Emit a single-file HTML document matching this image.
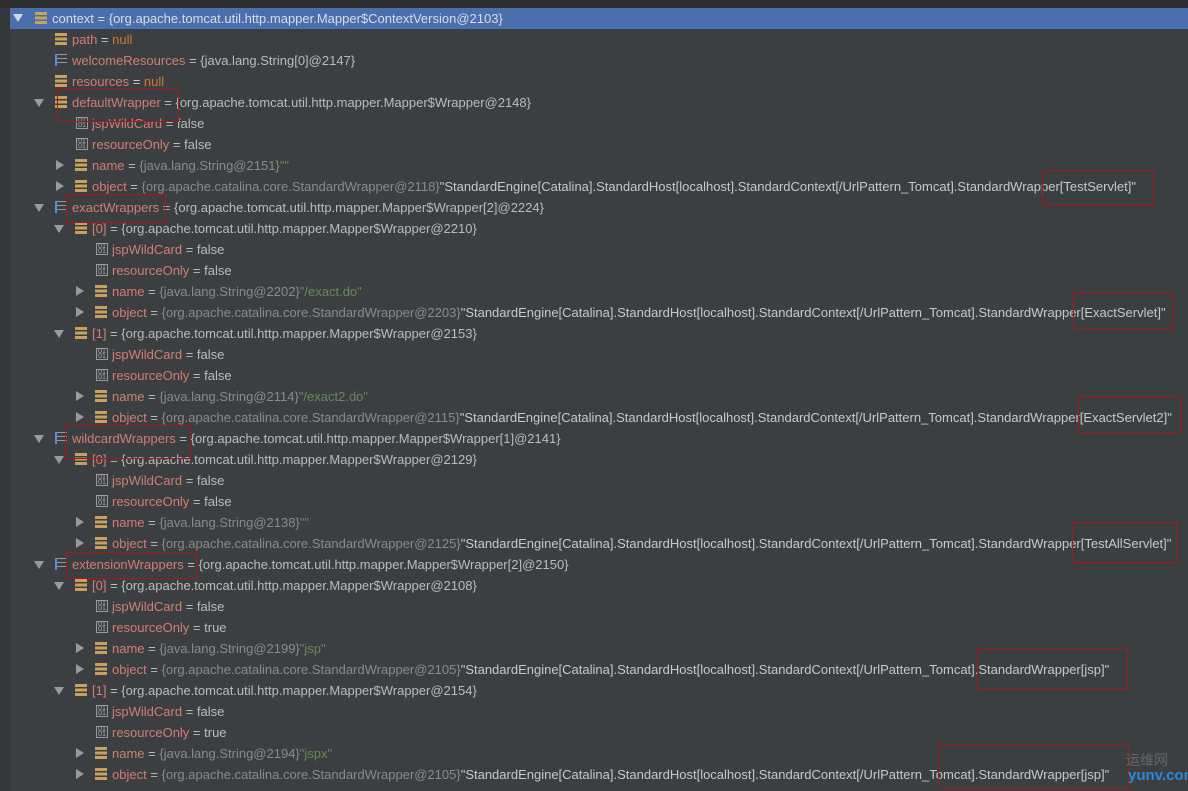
<!DOCTYPE html>
<html><head><meta charset="utf-8"><style>
body{margin:0;width:1188px;height:791px;overflow:hidden;background:#3c3f41;font-family:"Liberation Sans","Noto Sans CJK SC",sans-serif;font-size:13px;color:#bbbbbb;position:relative}
.top{position:absolute;left:0;top:0;width:1188px;height:8px;background:#2b2d2f}
.gut{position:absolute;left:0;top:8px;width:10px;height:783px;background:#353739}
.r{position:absolute;left:10px;right:0;height:21px;line-height:21px;white-space:nowrap}
.sel{background:#4b6eaf;color:#d8dde6}
.a{position:absolute;top:7px;width:0;height:0}
.ad{border-left:5px solid transparent;border-right:5px solid transparent;border-top:8px solid #9a9a9a}
.ar{border-top:5px solid transparent;border-bottom:5px solid transparent;border-left:8px solid #9a9a9a;top:5px}
.i{position:absolute;top:4px;width:12px;height:12px}
.f{background:repeating-linear-gradient(#c9a05e 0 3px,transparent 3px 4.5px)}
.b{border:1px solid #9a9a9a;height:12px;font-size:7px;line-height:5px;color:#aaa;text-align:center;box-sizing:border-box;width:12px}
.ay{border-left:2px solid #5c8ed6;background:repeating-linear-gradient(#9a9a9a 0 1px,transparent 1px 4px);width:10px}
.t{position:absolute}
.n{color:#d47d73}
.k{color:#cc7832}
.g{color:#8a8a8a}
.s{color:#6a8759}
.w{color:#c8c8c8}
.box{position:absolute;border:1px solid #a81818}
</style></head><body>
<div class="top"></div><div class="gut"></div>

<div class="r sel" style="top:8px"><span class="a ad" style="left:3px;top:6px;border-top-color:#cfd6e0"></span><span class="i f" style="left:25px"></span><span class="t" style="left:42px">context = {org.apache.tomcat.util.http.mapper.Mapper$ContextVersion@2103}</span></div>

<div class="r" style="top:29px"><span class="i f" style="left:45px"></span><span class="t n" style="left:62px">path <span class="w">=</span> <span class="k">null</span></span></div>
<div class="r" style="top:50px"><span class="i ay" style="left:45px"></span><span class="t" style="left:62px"><span class="n">welcomeResources</span> = {java.lang.String[0]@2147}</span></div>
<div class="r" style="top:71px"><span class="i f" style="left:45px"></span><span class="t n" style="left:62px">resources <span class="w">=</span> <span class="k">null</span></span></div>
<div class="r" style="top:92px"><span class="a ad" style="left:24px"></span><span class="i f" style="left:45px"></span><span class="t" style="left:62px"><span class="n">defaultWrapper</span> = {org.apache.tomcat.util.http.mapper.Mapper$Wrapper@2148}</span></div>
<div class="r" style="top:113px"><span class="i b" style="left:66px">01<br>01</span><span class="t" style="left:82px"><span class="n">jspWildCard</span> = false</span></div>
<div class="r" style="top:134px"><span class="i b" style="left:66px">01<br>01</span><span class="t" style="left:82px"><span class="n">resourceOnly</span> = false</span></div>
<div class="r" style="top:155px"><span class="a ar" style="left:46px"></span><span class="i f" style="left:65px"></span><span class="t" style="left:82px"><span class="n">name</span> = <span class="g">{java.lang.String@2151}</span><span class="s">""</span></span></div>
<div class="r" style="top:176px"><span class="a ar" style="left:46px"></span><span class="i f" style="left:65px"></span><span class="t" style="left:82px"><span class="n">object</span> = <span class="g">{org.apache.catalina.core.StandardWrapper@2118}</span><span class="w">"StandardEngine[Catalina].StandardHost[localhost].StandardContext[/UrlPattern_Tomcat].StandardWrapper[TestServlet]"</span></span></div>

<div class="r" style="top:197px"><span class="a ad" style="left:24px"></span><span class="i ay" style="left:45px"></span><span class="t" style="left:62px"><span class="n">exactWrappers</span> = {org.apache.tomcat.util.http.mapper.Mapper$Wrapper[2]@2224}</span></div>
<div class="r" style="top:218px"><span class="a ad" style="left:44px"></span><span class="i f" style="left:65px"></span><span class="t" style="left:82px"><span class="n">[0]</span> = {org.apache.tomcat.util.http.mapper.Mapper$Wrapper@2210}</span></div>
<div class="r" style="top:239px"><span class="i b" style="left:86px">01<br>01</span><span class="t" style="left:102px"><span class="n">jspWildCard</span> = false</span></div>
<div class="r" style="top:260px"><span class="i b" style="left:86px">01<br>01</span><span class="t" style="left:102px"><span class="n">resourceOnly</span> = false</span></div>
<div class="r" style="top:281px"><span class="a ar" style="left:66px"></span><span class="i f" style="left:85px"></span><span class="t" style="left:102px"><span class="n">name</span> = <span class="g">{java.lang.String@2202}</span><span class="s">"/exact.do"</span></span></div>
<div class="r" style="top:302px"><span class="a ar" style="left:66px"></span><span class="i f" style="left:85px"></span><span class="t" style="left:102px"><span class="n">object</span> = <span class="g">{org.apache.catalina.core.StandardWrapper@2203}</span><span class="w">"StandardEngine[Catalina].StandardHost[localhost].StandardContext[/UrlPattern_Tomcat].StandardWrapper[ExactServlet]"</span></span></div>
<div class="r" style="top:323px"><span class="a ad" style="left:44px"></span><span class="i f" style="left:65px"></span><span class="t" style="left:82px"><span class="n">[1]</span> = {org.apache.tomcat.util.http.mapper.Mapper$Wrapper@2153}</span></div>
<div class="r" style="top:344px"><span class="i b" style="left:86px">01<br>01</span><span class="t" style="left:102px"><span class="n">jspWildCard</span> = false</span></div>
<div class="r" style="top:365px"><span class="i b" style="left:86px">01<br>01</span><span class="t" style="left:102px"><span class="n">resourceOnly</span> = false</span></div>
<div class="r" style="top:386px"><span class="a ar" style="left:66px"></span><span class="i f" style="left:85px"></span><span class="t" style="left:102px"><span class="n">name</span> = <span class="g">{java.lang.String@2114}</span><span class="s">"/exact2.do"</span></span></div>
<div class="r" style="top:407px"><span class="a ar" style="left:66px"></span><span class="i f" style="left:85px"></span><span class="t" style="left:102px"><span class="n">object</span> = <span class="g">{org.apache.catalina.core.StandardWrapper@2115}</span><span class="w">"StandardEngine[Catalina].StandardHost[localhost].StandardContext[/UrlPattern_Tomcat].StandardWrapper[ExactServlet2]"</span></span></div>

<div class="r" style="top:428px"><span class="a ad" style="left:24px"></span><span class="i ay" style="left:45px"></span><span class="t" style="left:62px"><span class="n">wildcardWrappers</span> = {org.apache.tomcat.util.http.mapper.Mapper$Wrapper[1]@2141}</span></div>
<div class="r" style="top:449px"><span class="a ad" style="left:44px"></span><span class="i f" style="left:65px"></span><span class="t" style="left:82px"><span class="n">[0]</span> = {org.apache.tomcat.util.http.mapper.Mapper$Wrapper@2129}</span></div>
<div class="r" style="top:470px"><span class="i b" style="left:86px">01<br>01</span><span class="t" style="left:102px"><span class="n">jspWildCard</span> = false</span></div>
<div class="r" style="top:491px"><span class="i b" style="left:86px">01<br>01</span><span class="t" style="left:102px"><span class="n">resourceOnly</span> = false</span></div>
<div class="r" style="top:512px"><span class="a ar" style="left:66px"></span><span class="i f" style="left:85px"></span><span class="t" style="left:102px"><span class="n">name</span> = <span class="g">{java.lang.String@2138}</span><span class="s">""</span></span></div>
<div class="r" style="top:533px"><span class="a ar" style="left:66px"></span><span class="i f" style="left:85px"></span><span class="t" style="left:102px"><span class="n">object</span> = <span class="g">{org.apache.catalina.core.StandardWrapper@2125}</span><span class="w">"StandardEngine[Catalina].StandardHost[localhost].StandardContext[/UrlPattern_Tomcat].StandardWrapper[TestAllServlet]"</span></span></div>

<div class="r" style="top:554px"><span class="a ad" style="left:24px"></span><span class="i ay" style="left:45px"></span><span class="t" style="left:62px"><span class="n">extensionWrappers</span> = {org.apache.tomcat.util.http.mapper.Mapper$Wrapper[2]@2150}</span></div>
<div class="r" style="top:575px"><span class="a ad" style="left:44px"></span><span class="i f" style="left:65px"></span><span class="t" style="left:82px"><span class="n">[0]</span> = {org.apache.tomcat.util.http.mapper.Mapper$Wrapper@2108}</span></div>
<div class="r" style="top:596px"><span class="i b" style="left:86px">01<br>01</span><span class="t" style="left:102px"><span class="n">jspWildCard</span> = false</span></div>
<div class="r" style="top:617px"><span class="i b" style="left:86px">01<br>01</span><span class="t" style="left:102px"><span class="n">resourceOnly</span> = true</span></div>
<div class="r" style="top:638px"><span class="a ar" style="left:66px"></span><span class="i f" style="left:85px"></span><span class="t" style="left:102px"><span class="n">name</span> = <span class="g">{java.lang.String@2199}</span><span class="s">"jsp"</span></span></div>
<div class="r" style="top:659px"><span class="a ar" style="left:66px"></span><span class="i f" style="left:85px"></span><span class="t" style="left:102px"><span class="n">object</span> = <span class="g">{org.apache.catalina.core.StandardWrapper@2105}</span><span class="w">"StandardEngine[Catalina].StandardHost[localhost].StandardContext[/UrlPattern_Tomcat].StandardWrapper[jsp]"</span></span></div>
<div class="r" style="top:680px"><span class="a ad" style="left:44px"></span><span class="i f" style="left:65px"></span><span class="t" style="left:82px"><span class="n">[1]</span> = {org.apache.tomcat.util.http.mapper.Mapper$Wrapper@2154}</span></div>
<div class="r" style="top:701px"><span class="i b" style="left:86px">01<br>01</span><span class="t" style="left:102px"><span class="n">jspWildCard</span> = false</span></div>
<div class="r" style="top:722px"><span class="i b" style="left:86px">01<br>01</span><span class="t" style="left:102px"><span class="n">resourceOnly</span> = true</span></div>
<div class="r" style="top:743px"><span class="a ar" style="left:66px"></span><span class="i f" style="left:85px"></span><span class="t" style="left:102px"><span class="n">name</span> = <span class="g">{java.lang.String@2194}</span><span class="s">"jspx"</span></span></div>
<div class="r" style="top:764px"><span class="a ar" style="left:66px"></span><span class="i f" style="left:85px"></span><span class="t" style="left:102px"><span class="n">object</span> = <span class="g">{org.apache.catalina.core.StandardWrapper@2105}</span><span class="w">"StandardEngine[Catalina].StandardHost[localhost].StandardContext[/UrlPattern_Tomcat].StandardWrapper[jsp]"</span></span></div>

<div class="box" style="left:57px;top:88px;width:120px;height:32px"></div>
<div class="box" style="left:1042px;top:170px;width:110px;height:33px"></div>
<div class="box" style="left:66px;top:194px;width:98px;height:27px"></div>
<div class="box" style="left:1073px;top:292px;width:99px;height:35px"></div>
<div class="box" style="left:1078px;top:396px;width:101px;height:35px"></div>
<div class="box" style="left:65px;top:425px;width:124px;height:32px"></div>
<div class="box" style="left:1072px;top:522px;width:103px;height:39px"></div>
<div class="box" style="left:66px;top:552px;width:129px;height:25px"></div>
<div class="box" style="left:977px;top:648px;width:149px;height:39px"></div>
<div class="box" style="left:938px;top:745px;width:189px;height:42px"></div>
<div style="position:absolute;left:1126px;top:750px;color:#666;font-size:14px">运维网</div>
<div style="position:absolute;left:1128px;top:767px;color:#2a8ad8;font-size:15px;font-weight:bold">yunv.com</div>
</body></html>
